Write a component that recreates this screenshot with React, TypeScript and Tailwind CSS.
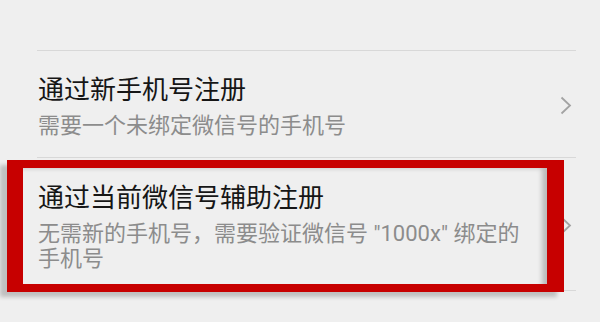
import React from "react";

const font = { fontFamily: 'Roboto, "Noto Sans CJK SC", sans-serif' };

function Chevron() {
  return (
    <svg width="12" height="19" viewBox="0 0 12 19" className="shrink-0 mr-[4px]">
      <polyline points="1.5,1.5 10,9.5 1.5,17.5" fill="none" stroke="#a3a3a3" strokeWidth="1.8" strokeLinejoin="miter" />
    </svg>
  );
}

type Option = { title: string; desc: string; pad: string };

const options: Option[] = [
  { title: "通过新手机号注册", desc: "需要一个未绑定微信号的手机号", pad: "pt-[21px] pb-[19px]" },
  {
    title: "通过当前微信号辅助注册",
    desc: '无需新的手机号，需要验证微信号 "1000x" 绑定的手机号',
    pad: "pt-[22px] pb-[19px]",
  },
];

export default function App() {
  return (
    <div className="relative w-[600px] h-[322px] overflow-hidden bg-[#efefef]" style={font}>
      <div className="pt-[50px]">
        <div className="ml-[37px] mr-[24px] border-t border-[#d8d8d8]" />

        {options.map((o) => (
          <div
            key={o.title}
            className={`ml-[37px] mr-[24px] pl-[1px] flex items-center border-b border-[#d8d8d8] ${o.pad}`}
          >
            <div className="w-[498px]">
              <p className="text-[26px] leading-[36px] text-[#161616]">{o.title}</p>
              <p className="mt-[5px] text-[22px] leading-[25px] text-[#8c8c8c]">{o.desc}</p>
            </div>
            <div className="ml-auto">
              <Chevron />
            </div>
          </div>
        ))}
      </div>

      {/* red highlight annotation drawn over the second option */}
      <div className="absolute left-[7px] top-[160px] w-[557px] h-[132px] border-[#c70000] border-l-[16px] border-r-[17px] border-t-[8px] border-b-[8px] shadow-[-7px_5px_4px_rgba(0,0,0,0.2)] pointer-events-none">
        <div className="w-full h-full shadow-[inset_-7px_2px_5px_-2px_rgba(0,0,0,0.22)]" />
      </div>
    </div>
  );
}
